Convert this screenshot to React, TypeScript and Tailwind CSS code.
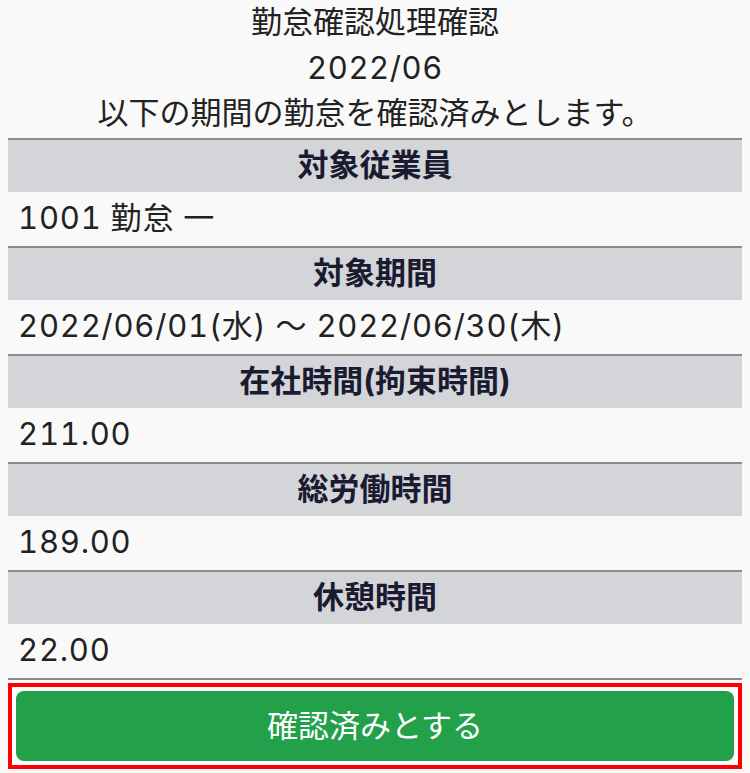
import React from "react";

const rows: { label: string; value: string }[] = [
  { label: "対象従業員", value: "1001 勤怠 一" },
  { label: "対象期間", value: "2022/06/01(水) 〜 2022/06/30(木)" },
  { label: "在社時間(拘束時間)", value: "211.00" },
  { label: "総労働時間", value: "189.00" },
  { label: "休憩時間", value: "22.00" },
];

export default function App() {
  return (
    <div
      className="min-h-[773px] w-[750px] bg-[#f9f9f9] px-2 text-[#222]"
      style={{ fontFamily: 'Inter, "Noto Sans CJK JP", "Noto Sans", sans-serif' }}
    >
      <div className="h-[138px] overflow-hidden">
        <div className="-mt-[1px] flex flex-col items-center text-[31px] leading-[45.5px]">
          <div>勤怠確認処理確認</div>
          <div className="tabular-nums tracking-[0.02em]">2022/06</div>
          <div>以下の期間の勤怠を確認済みとします。</div>
        </div>
      </div>
      {rows.map((r) => (
        <div key={r.label}>
          <div className="flex h-[54px] items-center justify-center border-t-2 border-[#8a8a8a] bg-[#d4d5d9] pb-[2px] text-[31px] font-bold text-[#1a1b30]">
            {r.label}
          </div>
          <div className="flex h-[54px] items-center whitespace-pre px-[10px] pb-[2px] text-[31px] tabular-nums tracking-[0.025em]">
            {r.value}
          </div>
        </div>
      ))}
      <div className="border-t-2 border-[#8a8a8a] pt-[3px]">
        <div className="border-4 border-[#ff0000] bg-white p-1">
          <button className="flex h-[70px] w-full items-center justify-center rounded-[8px] bg-[#22a04a] text-[31px] text-white">
            確認済みとする
          </button>
        </div>
      </div>
    </div>
  );
}
